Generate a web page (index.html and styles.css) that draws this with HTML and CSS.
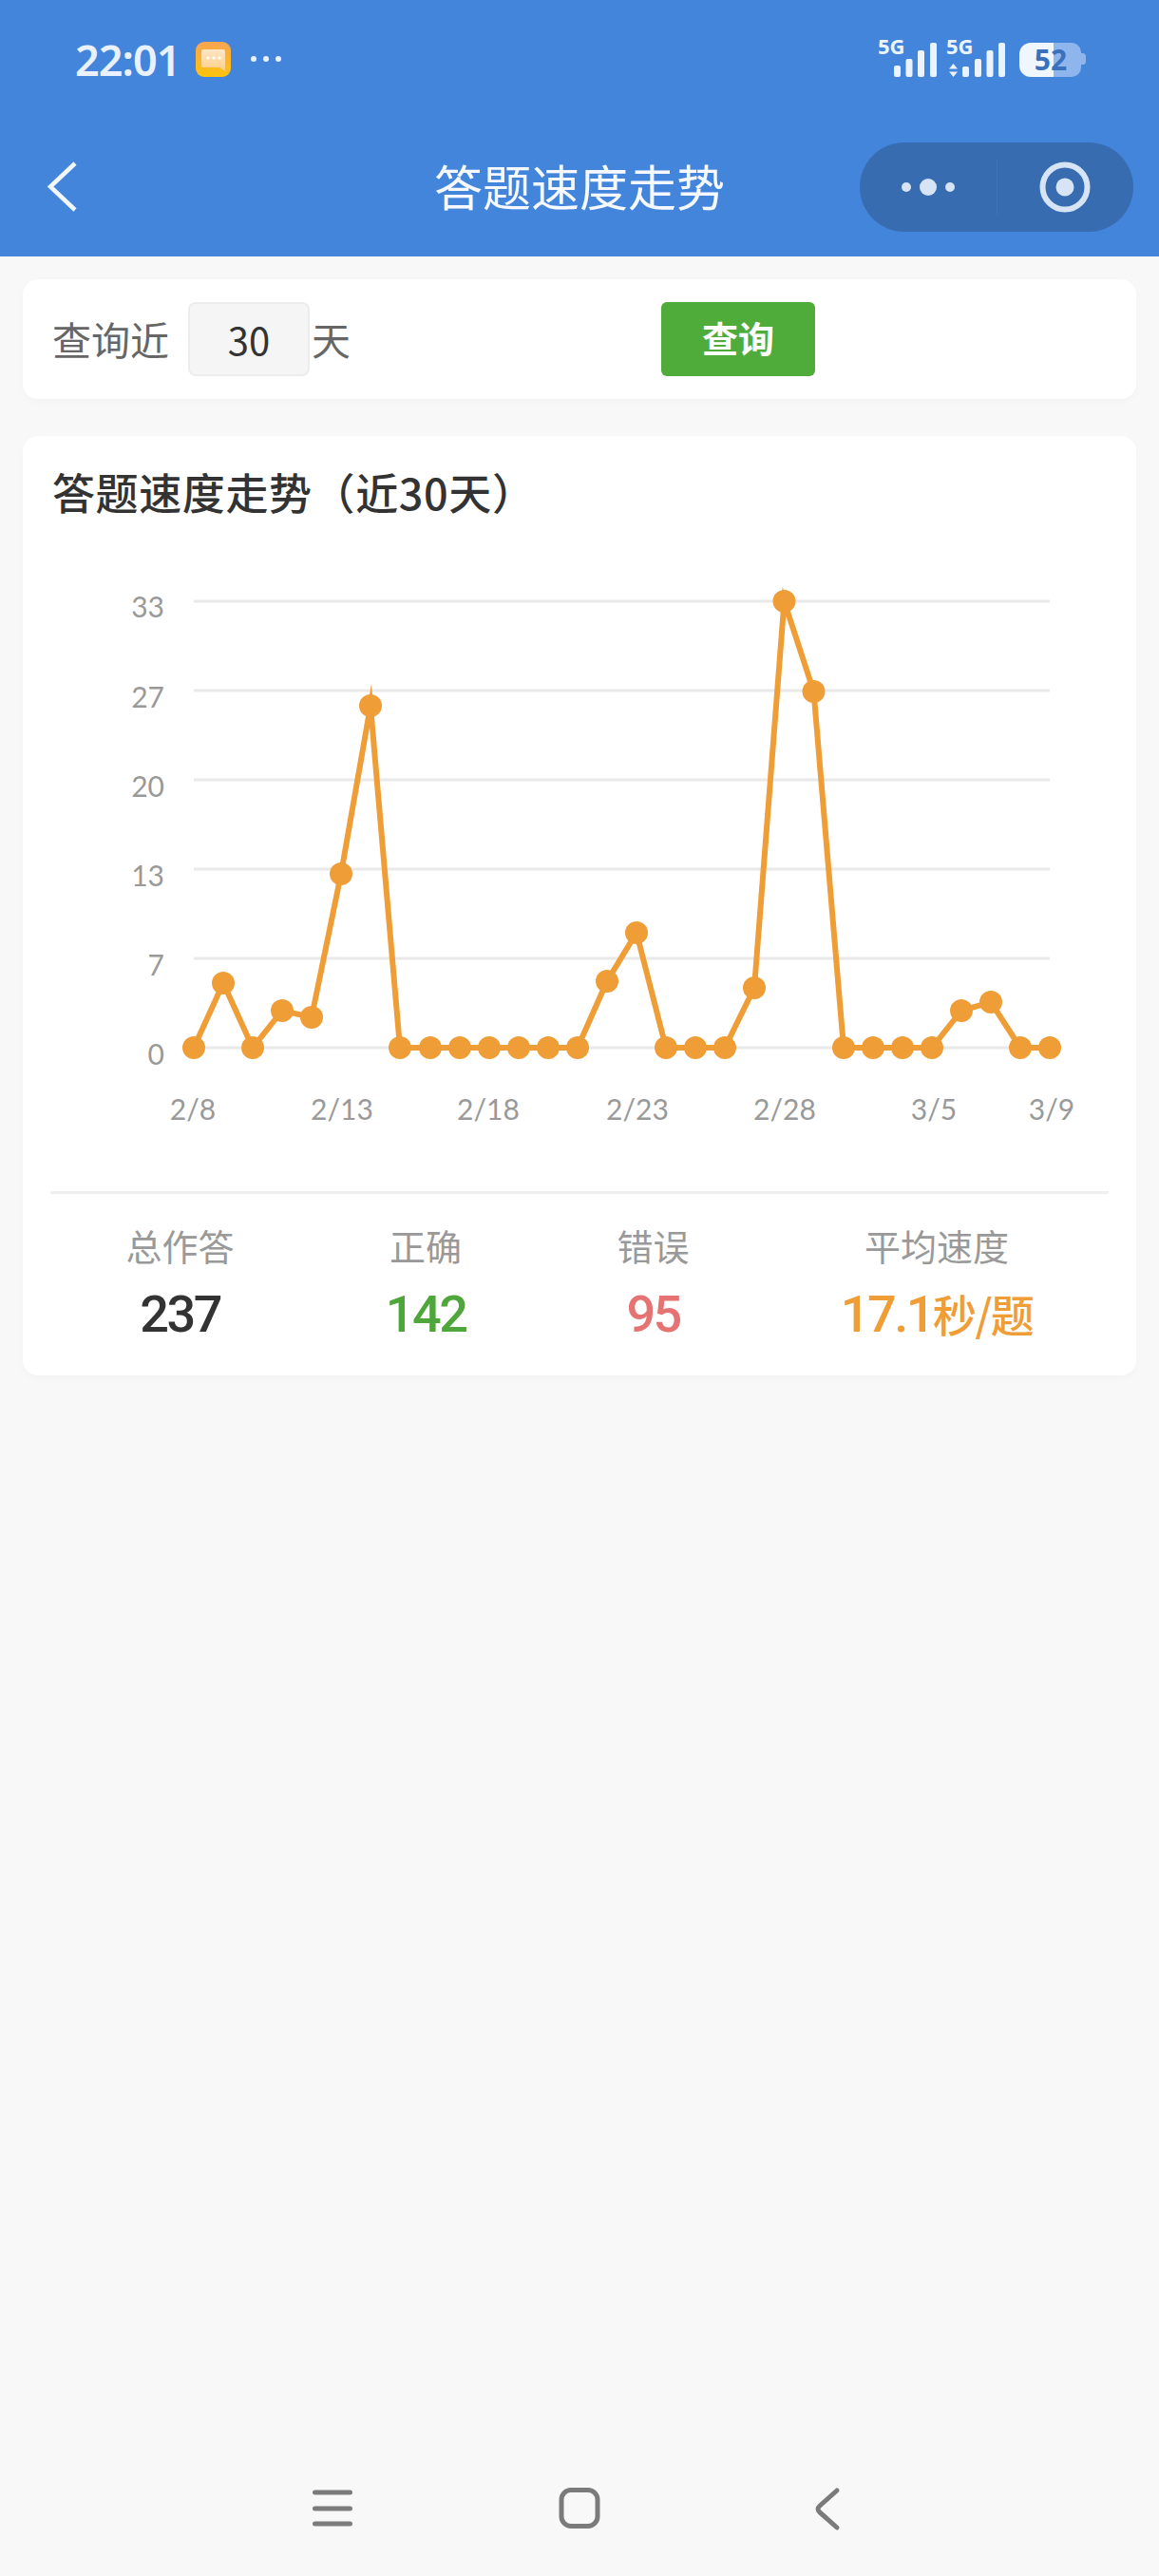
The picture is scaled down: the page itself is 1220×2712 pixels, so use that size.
FILE: index.html
```html
<!DOCTYPE html>
<html lang="zh-CN">
<head>
    <meta charset="UTF-8">
    <meta name="viewport" content="width=device-width, initial-scale=1.0">
    <title>答题速度走势</title>
    <link rel="stylesheet" href="styles.css">
</head>
<body>
    <header class="app-header">
        <div class="status-bar">
            <div class="status-left">
                <span class="status-time">22:01</span>
                <svg class="status-app" viewBox="0 0 37 37">
                    <defs>
                        <linearGradient id="appBg" x1="0" y1="0" x2="0" y2="1">
                            <stop offset="0" stop-color="#f7a452"/>
                            <stop offset="1" stop-color="#ffc40c"/>
                        </linearGradient>
                        <linearGradient id="appBubble" x1="0" y1="0" x2="0" y2="1">
                            <stop offset="0" stop-color="#ffe6c6"/>
                            <stop offset="1" stop-color="#fdcf86"/>
                        </linearGradient>
                    </defs>
                    <rect width="37" height="37" rx="9" fill="url(#appBg)"/>
                    <path d="M8 8h21a2 2 0 0 1 2 2v21l-6-4H8a2 2 0 0 1-2-2V10a2 2 0 0 1 2-2z" fill="url(#appBubble)"/>
                    <circle cx="13" cy="17" r="1.6" fill="#fff"/>
                    <circle cx="19" cy="17" r="1.6" fill="#fff"/>
                    <circle cx="25" cy="17" r="1.6" fill="#fff"/>
                </svg>
                <span class="status-dots"><i></i><i></i><i></i></span>
            </div>
            <svg class="status-right" viewBox="925 31 218 60">
                <text class="signal-label" x="924" y="56">5G</text>
                <rect x="941" y="68" width="7" height="12" rx="2" fill="#eaf3fe"/>
                <rect x="953.500" y="61" width="7" height="19" rx="2" fill="#eaf3fe"/>
                <rect x="966" y="52" width="7" height="28" rx="2" fill="#eaf3fe"/>
                <rect x="979" y="44" width="7" height="36" rx="2" fill="#eaf3fe"/>
                <text class="signal-label" x="996" y="56">5G</text>
                <path d="M1003.500 66l4.500 5.500h-9zM1003.500 80l-4.500-5.500h9z" fill="#eaf3fe"/>
                <rect x="1013" y="69" width="7" height="11" rx="2" fill="#eaf3fe"/>
                <rect x="1026" y="61" width="7" height="19" rx="2" fill="#eaf3fe"/>
                <rect x="1038.500" y="52" width="7" height="28" rx="2" fill="#eaf3fe"/>
                <rect x="1051" y="44" width="7" height="36" rx="2" fill="#eaf3fe"/>
                <path d="M1109 44h19a10 10 0 0 1 10 10v16a10 10 0 0 1-10 10h-19z" fill="#8fb6ec"/>
                <path d="M1138 55h1.500a3.500 3.500 0 0 1 3.500 3.500v5a3.500 3.500 0 0 1-3.500 3.500H1138z" fill="#8fb6ec"/>
                <path d="M1109 44h-24a12 12 0 0 0-12 12v12a12 12 0 0 0 12 12h24z" fill="#f0f6fe"/>
                <text class="battery-label" x="1106" y="73">52</text>
            </svg>
        </div>
        <div class="nav-bar">
            <svg class="nav-back" viewBox="0 0 32 54">
                <path d="M29 2L3 26.500 29 51" fill="none" stroke="#f2f7fe" stroke-width="4.500"/>
            </svg>
            <h1 class="nav-title">答题速度走势</h1>
            <div class="capsule">
                <div class="capsule-part">
                    <svg class="capsule-more" viewBox="0 0 56 18">
                        <circle cx="5" cy="9" r="5" fill="#d6e4f6"/>
                        <circle cx="28" cy="9" r="9" fill="#d6e4f6"/>
                        <circle cx="51" cy="9" r="5" fill="#d6e4f6"/>
                    </svg>
                </div>
                <div class="capsule-part capsule-part-right">
                    <svg class="capsule-target" viewBox="0 0 54 54">
                        <circle cx="27" cy="27" r="23.500" fill="none" stroke="#d6e4f6" stroke-width="6"/>
                        <circle cx="27" cy="27" r="9.500" fill="#d6e4f6"/>
                    </svg>
                </div>
            </div>
        </div>
    </header>

    <main class="content">
        <section class="card query-card">
            <span class="query-label">查询近</span>
            <input class="query-input" type="text" value="30">
            <span class="query-unit">天</span>
            <button class="query-button">查询</button>
        </section>

        <section class="card chart-card">
            <h2 class="chart-title">答题速度走势（近30天）</h2>
            <svg class="chart" viewBox="53 600 1114 654">
                <g class="grid">
                    <line x1="204" y1="633" x2="1105" y2="633"/>
                    <line x1="204" y1="727" x2="1105" y2="727"/>
                    <line x1="204" y1="821" x2="1105" y2="821"/>
                    <line x1="204" y1="915" x2="1105" y2="915"/>
                    <line x1="204" y1="1009" x2="1105" y2="1009"/>
                    <line x1="204" y1="1103" x2="1105" y2="1103"/>
                </g>
                <g class="y-labels">
                    <text x="173" y="650">33</text>
                    <text x="173" y="745">27</text>
                    <text x="173" y="839">20</text>
                    <text x="173" y="933">13</text>
                    <text x="173" y="1027">7</text>
                    <text x="173" y="1121">0</text>
                </g>
                <g class="x-labels">
                    <text x="203" y="1179">2/8</text>
                    <text x="360" y="1179">2/13</text>
                    <text x="514" y="1179">2/18</text>
                    <text x="671" y="1179">2/23</text>
                    <text x="826" y="1179">2/28</text>
                    <text x="983" y="1179">3/5</text>
                    <text x="1107" y="1179">3/9</text>
                </g>
                <polyline class="line" points="204,1103 235,1035 266,1103 297,1064 328,1071 359,920 390,743 421,1103 453,1103 484,1103 515,1103 546,1103 577,1103 608,1103 639,1033 670,982 701,1103 732,1103 763,1103 794,1040 825.500,633 856.500,728 888,1103 919,1103 950,1103 981,1103 1012,1064 1043,1055 1074,1103 1105,1103"/>
                <g class="dots">
                    <circle cx="204" cy="1103" r="12"/><circle cx="235" cy="1035" r="12"/><circle cx="266" cy="1103" r="12"/>
                    <circle cx="297" cy="1064" r="12"/><circle cx="328" cy="1071" r="12"/><circle cx="359" cy="920" r="12"/>
                    <circle cx="390" cy="743" r="12"/><circle cx="421" cy="1103" r="12"/><circle cx="453" cy="1103" r="12"/>
                    <circle cx="484" cy="1103" r="12"/><circle cx="515" cy="1103" r="12"/><circle cx="546" cy="1103" r="12"/>
                    <circle cx="577" cy="1103" r="12"/><circle cx="608" cy="1103" r="12"/><circle cx="639" cy="1033" r="12"/>
                    <circle cx="670" cy="982" r="12"/><circle cx="701" cy="1103" r="12"/><circle cx="732" cy="1103" r="12"/>
                    <circle cx="763" cy="1103" r="12"/><circle cx="794" cy="1040" r="12"/><circle cx="825.500" cy="633" r="12"/>
                    <circle cx="856.500" cy="728" r="12"/><circle cx="888" cy="1103" r="12"/><circle cx="919" cy="1103" r="12"/>
                    <circle cx="950" cy="1103" r="12"/><circle cx="981" cy="1103" r="12"/><circle cx="1012" cy="1064" r="12"/>
                    <circle cx="1043" cy="1055" r="12"/><circle cx="1074" cy="1103" r="12"/><circle cx="1105" cy="1103" r="12"/>
                </g>
            </svg>
            <div class="stats">
                <div class="stat">
                    <div class="stat-label">总作答</div>
                    <div class="stat-value">237</div>
                </div>
                <div class="stat">
                    <div class="stat-label">正确</div>
                    <div class="stat-value stat-right">142</div>
                </div>
                <div class="stat">
                    <div class="stat-label">错误</div>
                    <div class="stat-value stat-wrong">95</div>
                </div>
                <div class="stat">
                    <div class="stat-label">平均速度</div>
                    <div class="stat-value stat-speed">17.1<span class="stat-unit">秒/题</span></div>
                </div>
            </div>
        </section>
    </main>

    <footer class="system-nav">
        <svg class="system-icon" viewBox="0 0 600 60">
            <g fill="none" stroke="#7b7b7b" stroke-width="5" stroke-linecap="round" stroke-linejoin="round">
                <path d="M21.500 13h37M21.500 30h37M21.500 46h37"/>
                <rect x="281" y="10.500" width="38" height="38" rx="10"/>
                <path d="M571 11L553 27q-4 3.500 0 7l18 16"/>
            </g>
        </svg>
    </footer>
</body>
</html>
```

FILE: styles.css
```css
* {
    box-sizing: border-box;
}

body {
    font-family: "Noto Sans CJK SC", "Noto Sans", sans-serif;
    background-color: #f8f8f8;
    color: #333;
    margin: 0;
    padding: 0;
    height: 100vh;
    display: flex;
    flex-direction: column;
}

.app-header {
    background-color: #4485dc;
    height: 270px;
    color: #fff;
}

.status-bar {
    height: 124px;
    padding: 0 77px 0 79px;
    display: flex;
    justify-content: space-between;
    align-items: center;
}

.status-left {
    display: flex;
    align-items: center;
}

.status-time {
    font-family: "Noto Sans", sans-serif;
    font-size: 45px;
    font-weight: 600;
    letter-spacing: -1px;
    color: #e8f1fd;
}

.status-app {
    width: 37px;
    height: 37px;
    margin-left: 17px;
}

.status-dots {
    display: flex;
    gap: 7px;
    margin-left: 21px;
}

.status-dots i {
    width: 6px;
    height: 6px;
    border-radius: 50%;
    background: #e8f1fd;
}

.status-right {
    width: 218px;
    height: 60px;
}

.signal-label {
    font-family: "Noto Sans", sans-serif;
    font-size: 22px;
    font-weight: 700;
    fill: #eaf3fe;
}

.battery-label {
    font-family: "Noto Sans", sans-serif;
    font-size: 30px;
    font-weight: 700;
    fill: #3b70bd;
    text-anchor: middle;
}

.nav-bar {
    height: 146px;
    padding: 0 27px;
    display: grid;
    grid-template-columns: 1fr auto 1fr;
    align-items: center;
}

.nav-back {
    width: 32px;
    height: 54px;
    margin-left: 23px;
}

.nav-title {
    margin: 0 0 5px;
    font-size: 51px;
    font-weight: 400;
    color: #f5f9ff;
}

.capsule {
    justify-self: end;
    width: 288px;
    height: 94px;
    border-radius: 47px;
    background-color: #376cb0;
    display: flex;
    align-items: center;
}

.capsule-part {
    flex: 1;
    display: flex;
    justify-content: center;
    align-items: center;
}

.capsule-part-right {
    height: 58px;
    border-left: 1px solid #4174b6;
}

.capsule-more {
    width: 56px;
    height: 18px;
}

.capsule-target {
    width: 54px;
    height: 54px;
}

.content {
    flex: 1;
    padding: 24px;
    display: flex;
    flex-direction: column;
    gap: 39px;
}

.card {
    background: #fff;
    border-radius: 16px;
    box-shadow: 0 3px 10px rgba(0, 0, 0, 0.025);
}

.query-card {
    height: 126px;
    padding: 0 31px;
    display: flex;
    align-items: center;
    font-size: 41px;
    color: #666;
}

.query-label,
.query-unit {
    margin-bottom: 3px;
}

.query-input {
    width: 128px;
    height: 78px;
    margin: 0 2px 0 20px;
    border: 2px solid #ececec;
    border-radius: 8px;
    background: #f5f5f5;
    color: #333;
    font-family: inherit;
    font-size: 40px;
    text-align: center;
    padding: 0;
}

.query-button {
    width: 162px;
    height: 78px;
    margin-left: 327px;
    border: none;
    border-radius: 6px;
    background-color: #4fac3a;
    color: #fff;
    font-family: inherit;
    font-size: 38px;
    font-weight: 700;
    padding: 0 0 5px;
}

.chart-card {
    height: 989px;
    padding: 30px 29px 0;
}

.chart-title {
    margin: 0;
    padding-left: 2px;
    font-size: 45px;
    line-height: 58px;
    letter-spacing: 0.6px;
    font-weight: 500;
    color: #333;
}

.chart {
    display: block;
    width: 1114px;
    height: 654px;
    margin-top: 53px;
}

.grid line {
    stroke: #e9e9e9;
    stroke-width: 3;
}

.y-labels text,
.x-labels text {
    font-family: "Lato", sans-serif;
    font-size: 30px;
    fill: #999;
}

.y-labels text {
    text-anchor: end;
}

.x-labels text {
    text-anchor: middle;
}

.line {
    fill: none;
    stroke: #ef9d36;
    stroke-width: 6;
    stroke-linejoin: miter;
    stroke-miterlimit: 10;
}

.dots circle {
    fill: #ef9d36;
}

.stats {
    border-top: 3px solid #f0f0f0;
    padding-top: 29px;
    display: flex;
    justify-content: space-around;
}

.stat {
    text-align: center;
}

.stat-label {
    font-size: 38px;
    line-height: 50px;
    color: #999;
}

.stat-value {
    margin-top: 10px;
    font-family: "Roboto", "Noto Sans CJK SC", sans-serif;
    font-size: 54px;
    line-height: 76px;
    font-weight: 500;
    letter-spacing: -2.5px;
    color: #333;
}

.stat-right {
    color: #4fa63a;
}

.stat-wrong {
    color: #e57373;
}

.stat-speed {
    color: #ef9d36;
}

.stat-unit {
    font-family: "Noto Sans CJK SC", sans-serif;
    font-size: 46px;
    line-height: 1;
    letter-spacing: -1.5px;
}

.system-nav {
    height: 120px;
    display: flex;
    justify-content: center;
}

.system-icon {
    width: 600px;
    height: 60px;
    margin-top: 19px;
}
```
